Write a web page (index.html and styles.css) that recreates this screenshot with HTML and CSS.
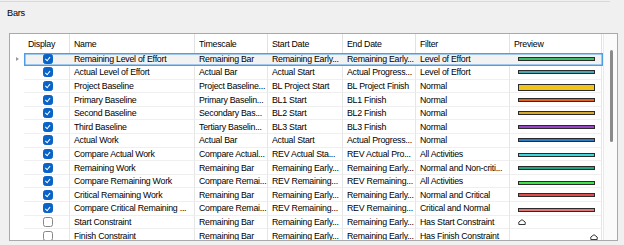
FILE: index.html
```html
<!DOCTYPE html>
<html>
<head>
<meta charset="utf-8">
<link rel="stylesheet" href="styles.css">
</head>
<body>
<div class="dialog">
  <div class="topline"></div>
  <div class="title">Bars</div>
  <div class="grid">
    <div class="viewport">
      <div class="row hdr">
        <div class="rh"></div>
        <div class="cells">
          <div class="c c-disp">Display</div>
          <div class="c c-name">Name</div>
          <div class="c c-ts">Timescale</div>
          <div class="c c-sd">Start Date</div>
          <div class="c c-ed">End Date</div>
          <div class="c c-fl">Filter</div>
          <div class="c c-pv">Preview</div>
        </div>
      </div>

      <div class="row">
        <div class="rh"><span class="arrow"></span></div>
        <div class="cells sel">
          <div class="c c-disp"><span class="cb on"></span></div>
          <div class="c c-name">Remaining Level of Effort</div>
          <div class="c c-ts">Remaining Bar</div>
          <div class="c c-sd">Remaining Early...</div>
          <div class="c c-ed">Remaining Early...</div>
          <div class="c c-fl">Level of Effort</div>
          <div class="c c-pv"><span class="bar b-loe"></span></div>
        </div>
      </div>

      <div class="row">
        <div class="rh"></div>
        <div class="cells">
          <div class="c c-disp"><span class="cb on"></span></div>
          <div class="c c-name">Actual Level of Effort</div>
          <div class="c c-ts">Actual Bar</div>
          <div class="c c-sd">Actual Start</div>
          <div class="c c-ed">Actual Progress...</div>
          <div class="c c-fl">Level of Effort</div>
          <div class="c c-pv"><span class="bar b-aloe"></span></div>
        </div>
      </div>

      <div class="row">
        <div class="rh"></div>
        <div class="cells">
          <div class="c c-disp"><span class="cb on"></span></div>
          <div class="c c-name">Project Baseline</div>
          <div class="c c-ts">Project Baseline...</div>
          <div class="c c-sd">BL Project Start</div>
          <div class="c c-ed">BL Project Finish</div>
          <div class="c c-fl">Normal</div>
          <div class="c c-pv low"><span class="bar thick b-pbl"></span></div>
        </div>
      </div>

      <div class="row">
        <div class="rh"></div>
        <div class="cells">
          <div class="c c-disp"><span class="cb on"></span></div>
          <div class="c c-name">Primary Baseline</div>
          <div class="c c-ts">Primary Baselin...</div>
          <div class="c c-sd">BL1 Start</div>
          <div class="c c-ed">BL1 Finish</div>
          <div class="c c-fl">Normal</div>
          <div class="c c-pv"><span class="bar b-bl1"></span></div>
        </div>
      </div>

      <div class="row">
        <div class="rh"></div>
        <div class="cells">
          <div class="c c-disp"><span class="cb on"></span></div>
          <div class="c c-name">Second Baseline</div>
          <div class="c c-ts">Secondary Bas...</div>
          <div class="c c-sd">BL2 Start</div>
          <div class="c c-ed">BL2 Finish</div>
          <div class="c c-fl">Normal</div>
          <div class="c c-pv"><span class="bar b-bl2"></span></div>
        </div>
      </div>

      <div class="row">
        <div class="rh"></div>
        <div class="cells">
          <div class="c c-disp"><span class="cb on"></span></div>
          <div class="c c-name">Third Baseline</div>
          <div class="c c-ts">Tertiary Baselin...</div>
          <div class="c c-sd">BL3 Start</div>
          <div class="c c-ed">BL3 Finish</div>
          <div class="c c-fl">Normal</div>
          <div class="c c-pv"><span class="bar b-bl3"></span></div>
        </div>
      </div>

      <div class="row">
        <div class="rh"></div>
        <div class="cells">
          <div class="c c-disp"><span class="cb on"></span></div>
          <div class="c c-name">Actual Work</div>
          <div class="c c-ts">Actual Bar</div>
          <div class="c c-sd">Actual Start</div>
          <div class="c c-ed">Actual Progress...</div>
          <div class="c c-fl">Normal</div>
          <div class="c c-pv"><span class="bar b-aw"></span></div>
        </div>
      </div>

      <div class="row">
        <div class="rh"></div>
        <div class="cells">
          <div class="c c-disp"><span class="cb on"></span></div>
          <div class="c c-name">Compare Actual Work</div>
          <div class="c c-ts">Compare Actual...</div>
          <div class="c c-sd">REV Actual Sta...</div>
          <div class="c c-ed">REV Actual Pro...</div>
          <div class="c c-fl">All Activities</div>
          <div class="c c-pv low"><span class="bar b-caw"></span></div>
        </div>
      </div>

      <div class="row">
        <div class="rh"></div>
        <div class="cells">
          <div class="c c-disp"><span class="cb on"></span></div>
          <div class="c c-name">Remaining Work</div>
          <div class="c c-ts">Remaining Bar</div>
          <div class="c c-sd">Remaining Early...</div>
          <div class="c c-ed">Remaining Early...</div>
          <div class="c c-fl">Normal and Non-criti...</div>
          <div class="c c-pv"><span class="bar b-rw"></span></div>
        </div>
      </div>

      <div class="row">
        <div class="rh"></div>
        <div class="cells">
          <div class="c c-disp"><span class="cb on"></span></div>
          <div class="c c-name">Compare Remaining Work</div>
          <div class="c c-ts">Compare Remai...</div>
          <div class="c c-sd">REV Remaining...</div>
          <div class="c c-ed">REV Remaining...</div>
          <div class="c c-fl">All Activities</div>
          <div class="c c-pv low"><span class="bar b-crw"></span></div>
        </div>
      </div>

      <div class="row">
        <div class="rh"></div>
        <div class="cells">
          <div class="c c-disp"><span class="cb on"></span></div>
          <div class="c c-name">Critical Remaining Work</div>
          <div class="c c-ts">Remaining Bar</div>
          <div class="c c-sd">Remaining Early...</div>
          <div class="c c-ed">Remaining Early...</div>
          <div class="c c-fl">Normal and Critical</div>
          <div class="c c-pv"><span class="bar b-cr"></span></div>
        </div>
      </div>

      <div class="row">
        <div class="rh"></div>
        <div class="cells">
          <div class="c c-disp"><span class="cb on"></span></div>
          <div class="c c-name">Compare Critical Remaining ...</div>
          <div class="c c-ts">Compare Remai...</div>
          <div class="c c-sd">REV Remaining...</div>
          <div class="c c-ed">REV Remaining...</div>
          <div class="c c-fl">Critical and Normal</div>
          <div class="c c-pv low"><span class="bar b-ccr"></span></div>
        </div>
      </div>

      <div class="row">
        <div class="rh"></div>
        <div class="cells">
          <div class="c c-disp"><span class="cb"></span></div>
          <div class="c c-name">Start Constraint</div>
          <div class="c c-ts">Remaining Bar</div>
          <div class="c c-sd">Remaining Early...</div>
          <div class="c c-ed">Remaining Early...</div>
          <div class="c c-fl">Has Start Constraint</div>
          <div class="c c-pv start"><svg class="mark" width="8" height="6" viewBox="0 0 8 6"><path d="M0.8 5.5 L0.8 3 L4 0.7 L7.2 3 L7.2 5.5 Z" fill="#fff" stroke="#222" stroke-width="0.9" stroke-linejoin="round"/></svg></div>
        </div>
      </div>

      <div class="row">
        <div class="rh"></div>
        <div class="cells">
          <div class="c c-disp"><span class="cb"></span></div>
          <div class="c c-name">Finish Constraint</div>
          <div class="c c-ts">Remaining Bar</div>
          <div class="c c-sd">Remaining Early...</div>
          <div class="c c-ed">Remaining Early...</div>
          <div class="c c-fl">Has Finish Constraint</div>
          <div class="c c-pv finish"><svg class="mark" width="8" height="6" viewBox="0 0 8 6"><path d="M0.8 5.5 L0.8 3 L4 0.7 L7.2 3 L7.2 5.5 Z" fill="#fff" stroke="#222" stroke-width="0.9" stroke-linejoin="round"/></svg></div>
        </div>
      </div>
    </div>
    <div class="vscroll"><div class="thumb"></div></div>
  </div>
</div>
</body>
</html>
```

FILE: styles.css
```css
* { box-sizing: border-box; }
html, body {
  margin: 0;
  padding: 0;
  background: #f0f0f0;
  overflow: hidden;
}
body {
  font-family: "Liberation Sans", Arial, sans-serif;
  font-size: 8.8px;
  letter-spacing: -0.25px;
  color: #000;
  width: 624px;
  height: 245px;
}
.dialog {
  display: flex;
  flex-direction: column;
  height: 245px;
}
.topline {
  height: 2px;
  margin: 0 14px 0 0;
  border-bottom: 1px solid #d9d9d9;
}
.title {
  margin: 5px 0 0 7px;
  height: 12px;
  line-height: 12px;
  font-size: 9.2px;
}
.grid {
  margin: 14px 0 0 9px;
  width: 609px;
  height: 208px;
  border: 1px solid #a9a9a9;
  background: #fff;
  display: flex;
  overflow: hidden;
}
.viewport {
  width: 593px;
  display: flex;
  flex-direction: column;
  overflow: hidden;
}
.row {
  display: flex;
  height: 13.6px;
  flex: none;
}
.row.hdr {
  height: 18.5px;
}
.rh {
  width: 14px;
  flex: none;
  display: flex;
  align-items: center;
  justify-content: center;
}
.arrow {
  width: 0;
  height: 0;
  border-left: 3px solid #9a9a9a;
  border-top: 2.5px solid transparent;
  border-bottom: 2.5px solid transparent;
  margin-left: 0;
}
.cells {
  flex: 1;
  display: flex;
}
.cells.sel {
  background: #f2f2f2;
  box-shadow: inset 0 0 0 1.5px #4d9ee6;
}
.c {
  flex: none;
  display: flex;
  align-items: center;
  padding-left: 4px;
  white-space: nowrap;
  overflow: hidden;
  border-right: 1px solid #e6e6e6;
  border-bottom: 1px solid #efefef;
}
.hdr .c {
  border-bottom: none;
  border-right: 1px solid #e2e2e2;
  padding-top: 1px;
}
.sel .c {
  border-color: transparent;
}
.c-disp { width: 46px; justify-content: center; padding-left: 2px; }
.hdr .c-disp { justify-content: flex-start; padding-left: 4px; }
.c-name { width: 125px; }
.c-ts { width: 73px; }
.c-sd { width: 75px; }
.c-ed { width: 73px; }
.c-fl { width: 94px; }
.c-pv { width: 92px; padding-left: 8px; }
.hdr .c-pv { padding-left: 4px; }

.cb {
  width: 10px;
  height: 10px;
  border-radius: 2.5px;
  border: 1px solid #868686;
  background: #fff;
  position: relative;
  flex: none;
}
.cb.on {
  background: #0a64c8;
  border-color: #0a64c8;
}
.cb.on::after {
  content: "";
  position: absolute;
  left: 2.6px;
  top: 1.2px;
  width: 2.4px;
  height: 4.4px;
  border-right: 1.1px solid #fff;
  border-bottom: 1.1px solid #fff;
  transform: rotate(40deg);
}

.bar {
  display: block;
  width: 77px;
  height: 4px;
  border: 1px solid #2b2b2b;
  background: #3cbf6c;
}
.bar.thick { height: 7px; }
.c-pv.low { padding-top: 3px; }
.b-loe { background: #3cbd6d; }
.b-aloe { background: #4aa7ad; }
.b-pbl { background: #f0c419; }
.b-bl1 { background: #e2621f; }
.b-bl2 { background: #d5ac2c; }
.b-bl3 { background: #9a45c6; }
.b-aw { background: #2f7cc4; }
.b-caw { background: #3ed6de; }
.b-rw { background: #22a585; }
.b-crw { background: #3ee24a; }
.b-cr { background: #e14c4c; }
.b-ccr { background: #e27676; }

.c-pv.start { padding-left: 8px; padding-top: 0; }
.c-pv.finish { padding-left: 80px; padding-top: 3px; }
.mark { display: block; }

.vscroll {
  width: 14px;
  flex: none;
  background: #fbfbfb;
  border-left: 1px solid #eaeaea;
  padding: 16px 0 0 6px;
}
.thumb {
  width: 2.5px;
  height: 92px;
  border-radius: 2px;
  background: #8a8a8a;
}
```
